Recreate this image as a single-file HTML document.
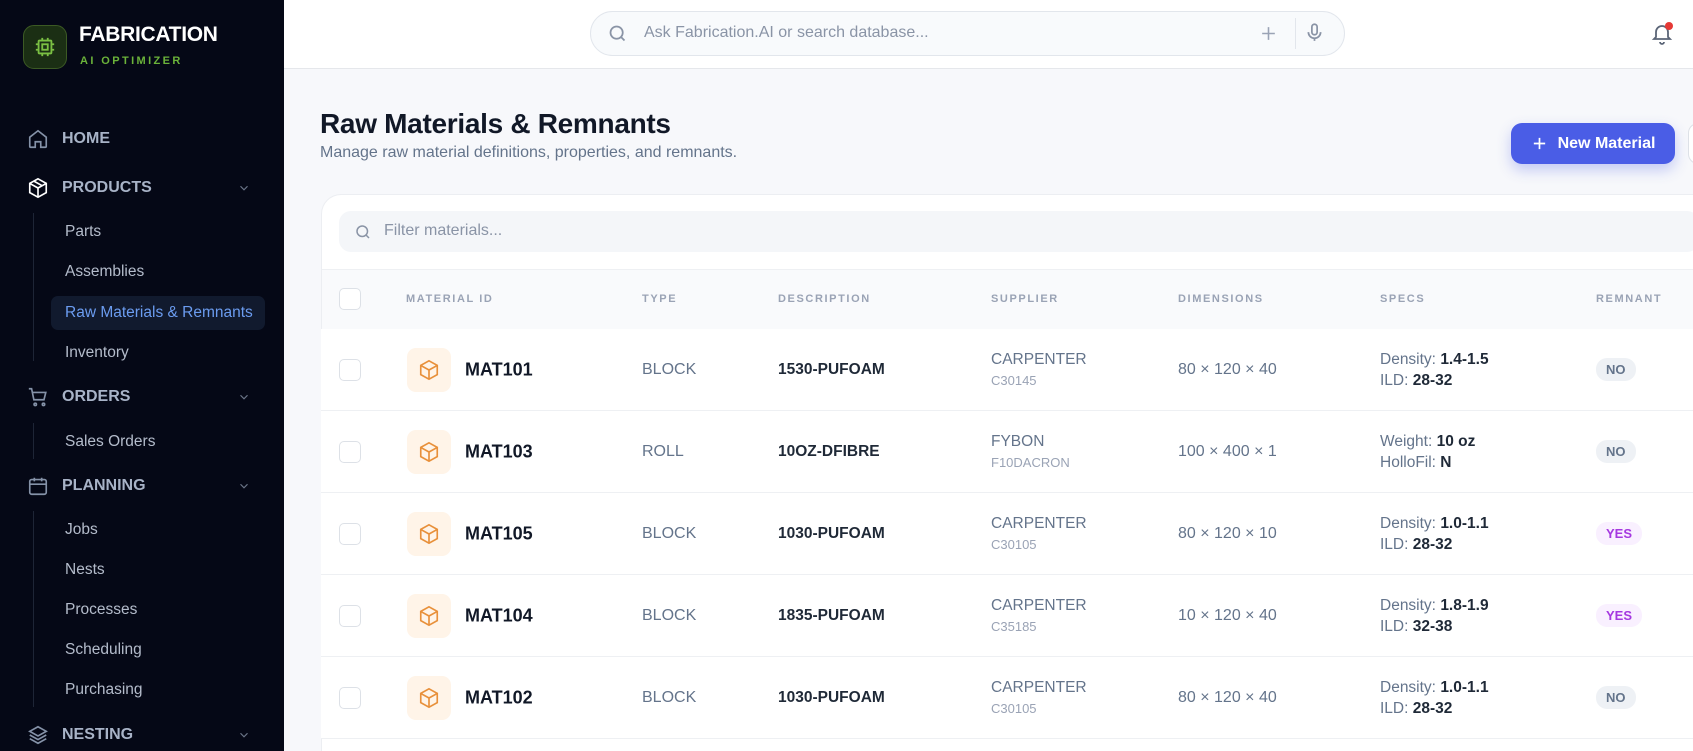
<!DOCTYPE html>
<html style="width:1693px;height:751px;overflow:hidden"><head><meta charset="utf-8"><style>
*{box-sizing:border-box;margin:0;padding:0}
body{width:1693px;height:751px;overflow:hidden;font-family:"Liberation Sans",sans-serif;background:#f7f8fb;position:relative}
.a{position:absolute}
#sb{left:0;top:0;width:284px;height:751px;background:#050816}
.nav{position:absolute;left:62px;font-size:16px;font-weight:bold;color:#a8b3c7;transform:translateY(-50%)}
.ico{position:absolute;left:27px;transform:translateY(-50%)}
.chev{position:absolute;left:237px;transform:translateY(-50%)}
.sub{position:absolute;left:65px;font-size:15.5px;color:#b4bccb;transform:translateY(-50%)}
.vl{position:absolute;left:33px;width:1px;background:#1e2536}
#hd{left:284px;top:0;width:1409px;height:69px;background:#fff;border-bottom:1px solid #e5e7eb}
.th{position:absolute;top:299px;transform:translateY(-50%);font-size:11px;font-weight:bold;letter-spacing:1.6px;color:#9aa3b5}
.row{position:absolute;left:321px;width:1372px;height:82px;border-bottom:1px solid #eef0f3;background:#fff}
.c{position:absolute;top:50%;transform:translateY(-50%)}
.cb{width:22px;height:22px;border:1.5px solid #dde1e7;border-radius:5px;background:#fff}
.box{width:44px;height:44px;border-radius:9px;background:#fff4e8;display:flex;align-items:center;justify-content:center}
.id{font-size:18px;font-weight:bold;color:#111827}
.t{font-size:16px;color:#64748b}
.d{font-size:15.5px;font-weight:bold;color:#1f2937}
.s1{font-size:15.5px;color:#64748b;line-height:22px}
.s2{font-size:13px;color:#9aa3b5;line-height:20px}
.sp{font-size:15.5px;color:#64748b;line-height:21px}
.sp b{color:#1f2937}
.no{font-size:13px;font-weight:bold;color:#64748b;background:#eef1f5;border-radius:11px;padding:4px 10px}
.yes{font-size:13px;font-weight:bold;color:#a538e0;background:#f9f0ff;border-radius:11px;padding:4px 10px}
</style></head><body>
<div id="sb" class="a">
 <div class="a" style="left:23px;top:25px;width:44px;height:44px;border-radius:11px;background:#1b2f14;border:1px solid #3c5a24;display:flex;align-items:center;justify-content:center">
  <svg width="22" height="22" viewBox="0 0 24 24" fill="none" stroke="#7bc043" stroke-width="2"><rect x="5" y="5" width="14" height="14" rx="1"/><rect x="9" y="9" width="6" height="6"/><path d="M9 2v3M15 2v3M9 19v3M15 19v3M2 9h3M2 15h3M19 9h3M19 15h3"/></svg>
 </div>
 <div class="a" style="left:79px;top:23px;font-size:21px;font-weight:bold;color:#fff;letter-spacing:-0.3px">FABRICATION</div>
 <div class="a" style="left:80px;top:55px;font-size:11px;font-weight:bold;color:#6bb33a;letter-spacing:2.4px">AI OPTIMIZER</div>

 <svg class="ico" style="top:139px" width="22" height="22" viewBox="0 0 24 24" fill="none" stroke="#8592a8" stroke-width="1.8"><path d="M3 10l9-7 9 7v10a1 1 0 0 1-1 1h-5v-6h-6v6H4a1 1 0 0 1-1-1z"/></svg>
 <div class="nav" style="top:139px">HOME</div>
 <svg class="ico" style="top:188px" width="22" height="22" viewBox="0 0 24 24" fill="none" stroke="#fff" stroke-width="1.8"><path d="M12 2l9 5v10l-9 5-9-5V7z"/><path d="M3 7l9 5 9-5M12 12v10M7.5 4.5l9 5"/></svg>
 <div class="nav" style="top:188px">PRODUCTS</div>
 <svg class="chev" style="top:188px" width="14" height="14" viewBox="0 0 24 24" fill="none" stroke="#6b7588" stroke-width="2"><path d="M6 9l6 6 6-6"/></svg>
 <div class="vl" style="top:213px;height:148px"></div>
 <div class="sub" style="top:232px">Parts</div>
 <div class="sub" style="top:272px">Assemblies</div>
 <div class="a" style="left:51px;top:296px;width:214px;height:34px;border-radius:7px;background:#111a2e"></div>
 <div class="sub" style="top:313px;color:#6b9cf0">Raw Materials &amp; Remnants</div>
 <div class="sub" style="top:353px">Inventory</div>
 <svg class="ico" style="top:397px" width="22" height="22" viewBox="0 0 24 24" fill="none" stroke="#8592a8" stroke-width="1.8"><path d="M2 3h3l2.5 12h11l2-8H6"/><circle cx="9" cy="20" r="1.3"/><circle cx="18" cy="20" r="1.3"/></svg>
 <div class="nav" style="top:397px">ORDERS</div>
 <svg class="chev" style="top:397px" width="14" height="14" viewBox="0 0 24 24" fill="none" stroke="#6b7588" stroke-width="2"><path d="M6 9l6 6 6-6"/></svg>
 <div class="vl" style="top:423px;height:36px"></div>
 <div class="sub" style="top:442px">Sales Orders</div>
 <svg class="ico" style="top:486px" width="22" height="22" viewBox="0 0 24 24" fill="none" stroke="#8592a8" stroke-width="1.8"><rect x="3" y="5" width="18" height="16" rx="2"/><path d="M3 10h18M8 3v4M16 3v4"/></svg>
 <div class="nav" style="top:486px">PLANNING</div>
 <svg class="chev" style="top:486px" width="14" height="14" viewBox="0 0 24 24" fill="none" stroke="#6b7588" stroke-width="2"><path d="M6 9l6 6 6-6"/></svg>
 <div class="vl" style="top:511px;height:196px"></div>
 <div class="sub" style="top:530px">Jobs</div>
 <div class="sub" style="top:570px">Nests</div>
 <div class="sub" style="top:610px">Processes</div>
 <div class="sub" style="top:650px">Scheduling</div>
 <div class="sub" style="top:690px">Purchasing</div>
 <svg class="ico" style="top:735px" width="22" height="22" viewBox="0 0 24 24" fill="none" stroke="#8592a8" stroke-width="1.8"><path d="M12 3l9 5-9 5-9-5z"/><path d="M3 12l9 5 9-5M3 16l9 5 9-5"/></svg>
 <div class="nav" style="top:735px">NESTING</div>
 <svg class="chev" style="top:735px" width="14" height="14" viewBox="0 0 24 24" fill="none" stroke="#6b7588" stroke-width="2"><path d="M6 9l6 6 6-6"/></svg>
</div>

<div id="hd" class="a"></div>
<div class="a" style="left:590px;top:11px;width:755px;height:45px;border:1px solid #e2e6ec;border-radius:23px;background:#f8fafc"></div>
<svg class="a" style="left:607px;top:23px" width="21" height="21" viewBox="0 0 24 24" fill="none" stroke="#8a94a6" stroke-width="2"><circle cx="11" cy="11" r="7"/><path d="M20 20l-4-4"/></svg>
<div class="a" style="left:644px;top:24px;font-size:16px;color:#8a94a6">Ask Fabrication.AI or search database...</div>
<svg class="a" style="left:1259px;top:24px" width="19" height="19" viewBox="0 0 24 24" fill="none" stroke="#9aa3b5" stroke-width="2"><path d="M12 4v16M4 12h16"/></svg>
<div class="a" style="left:1295px;top:18px;width:1px;height:31px;background:#e2e6ec"></div>
<svg class="a" style="left:1304px;top:22px" width="21" height="22" viewBox="0 0 24 24" fill="none" stroke="#8a94a6" stroke-width="2"><rect x="9" y="2" width="6" height="12" rx="3"/><path d="M5 11a7 7 0 0 0 14 0M12 18v3"/></svg>
<svg class="a" style="left:1650px;top:21px" width="24" height="24" viewBox="0 0 24 24" fill="none" stroke="#5b6577" stroke-width="1.8"><path d="M6 16V11a6 6 0 0 1 12 0v5l2 2H4z"/><path d="M10 21a2 2 0 0 0 4 0"/></svg>
<div class="a" style="left:1665px;top:22px;width:8px;height:8px;border-radius:50%;background:#e53935"></div>

<div class="a" style="left:320px;top:108px;font-size:28px;font-weight:bold;color:#111827;letter-spacing:-0.3px">Raw Materials &amp; Remnants</div>
<div class="a" style="left:320px;top:144px;font-size:16px;color:#64748b">Manage raw material definitions, properties, and remnants.</div>
<div class="a" style="left:1511px;top:123px;width:164px;height:41px;border-radius:11px;background:#4a5de6;box-shadow:0 6px 14px rgba(74,93,230,.3);color:#fff;font-weight:bold;font-size:16px;display:flex;align-items:center;justify-content:center;gap:10px"><svg width="17" height="17" viewBox="0 0 24 24" fill="none" stroke="#fff" stroke-width="2.4"><path d="M12 4v16M4 12h16"/></svg>New Material</div>
<div class="a" style="left:1688px;top:123px;width:20px;height:41px;border-radius:11px;border:1px solid #dde1e7;background:#fff"></div>

<div class="a" style="left:321px;top:194px;width:1400px;height:557px;border-radius:20px 0 0 0;background:#fff;border:1px solid #eceef2;border-bottom:none"></div>
<div class="a" style="left:339px;top:211px;width:1360px;height:41px;border-radius:12px;background:#f4f6f9"></div>
<svg class="a" style="left:354px;top:223px" width="18" height="18" viewBox="0 0 24 24" fill="none" stroke="#8a94a6" stroke-width="2"><circle cx="11" cy="11" r="7"/><path d="M20 20l-4-4"/></svg>
<div class="a" style="left:384px;top:222px;font-size:16px;color:#8a94a6">Filter materials...</div>
<div class="a" style="left:322px;top:269px;width:1371px;height:60px;background:#f9fafc;border-top:1px solid #eef0f3"></div>
<div class="a cb" style="left:339px;top:288px"></div>
<div class="th" style="left:406px">MATERIAL ID</div>
<div class="th" style="left:642px">TYPE</div>
<div class="th" style="left:778px">DESCRIPTION</div>
<div class="th" style="left:991px">SUPPLIER</div>
<div class="th" style="left:1178px">DIMENSIONS</div>
<div class="th" style="left:1380px">SPECS</div>
<div class="th" style="left:1596px">REMNANT</div>

<div class="row" style="top:329px">
 <div class="c cb" style="left:18px"></div>
 <div class="c box" style="left:86px"><svg width="22" height="22" viewBox="0 0 24 24" fill="none" stroke="#e8903a" stroke-width="1.8"><path d="M12 2l9 5v10l-9 5-9-5V7z"/><path d="M3 7l9 5 9-5M12 12v10"/></svg></div>
 <div class="c id" style="left:144px">MAT101</div><div class="c t" style="left:321px">BLOCK</div><div class="c d" style="left:457px">1530-PUFOAM</div>
 <div class="c" style="left:670px"><div class="s1">CARPENTER</div><div class="s2">C30145</div></div>
 <div class="c t" style="left:857px">80 × 120 × 40</div>
 <div class="c sp" style="left:1059px">Density: <b>1.4-1.5</b><br>ILD: <b>28-32</b></div>
 <div class="c" style="left:1275px"><span class="no">NO</span></div>
</div>
<div class="row" style="top:411px">
 <div class="c cb" style="left:18px"></div>
 <div class="c box" style="left:86px"><svg width="22" height="22" viewBox="0 0 24 24" fill="none" stroke="#e8903a" stroke-width="1.8"><path d="M12 2l9 5v10l-9 5-9-5V7z"/><path d="M3 7l9 5 9-5M12 12v10"/></svg></div>
 <div class="c id" style="left:144px">MAT103</div><div class="c t" style="left:321px">ROLL</div><div class="c d" style="left:457px">10OZ-DFIBRE</div>
 <div class="c" style="left:670px"><div class="s1">FYBON</div><div class="s2">F10DACRON</div></div>
 <div class="c t" style="left:857px">100 × 400 × 1</div>
 <div class="c sp" style="left:1059px">Weight: <b>10 oz</b><br>HolloFil: <b>N</b></div>
 <div class="c" style="left:1275px"><span class="no">NO</span></div>
</div>
<div class="row" style="top:493px">
 <div class="c cb" style="left:18px"></div>
 <div class="c box" style="left:86px"><svg width="22" height="22" viewBox="0 0 24 24" fill="none" stroke="#e8903a" stroke-width="1.8"><path d="M12 2l9 5v10l-9 5-9-5V7z"/><path d="M3 7l9 5 9-5M12 12v10"/></svg></div>
 <div class="c id" style="left:144px">MAT105</div><div class="c t" style="left:321px">BLOCK</div><div class="c d" style="left:457px">1030-PUFOAM</div>
 <div class="c" style="left:670px"><div class="s1">CARPENTER</div><div class="s2">C30105</div></div>
 <div class="c t" style="left:857px">80 × 120 × 10</div>
 <div class="c sp" style="left:1059px">Density: <b>1.0-1.1</b><br>ILD: <b>28-32</b></div>
 <div class="c" style="left:1275px"><span class="yes">YES</span></div>
</div>
<div class="row" style="top:575px">
 <div class="c cb" style="left:18px"></div>
 <div class="c box" style="left:86px"><svg width="22" height="22" viewBox="0 0 24 24" fill="none" stroke="#e8903a" stroke-width="1.8"><path d="M12 2l9 5v10l-9 5-9-5V7z"/><path d="M3 7l9 5 9-5M12 12v10"/></svg></div>
 <div class="c id" style="left:144px">MAT104</div><div class="c t" style="left:321px">BLOCK</div><div class="c d" style="left:457px">1835-PUFOAM</div>
 <div class="c" style="left:670px"><div class="s1">CARPENTER</div><div class="s2">C35185</div></div>
 <div class="c t" style="left:857px">10 × 120 × 40</div>
 <div class="c sp" style="left:1059px">Density: <b>1.8-1.9</b><br>ILD: <b>32-38</b></div>
 <div class="c" style="left:1275px"><span class="yes">YES</span></div>
</div>
<div class="row" style="top:657px">
 <div class="c cb" style="left:18px"></div>
 <div class="c box" style="left:86px"><svg width="22" height="22" viewBox="0 0 24 24" fill="none" stroke="#e8903a" stroke-width="1.8"><path d="M12 2l9 5v10l-9 5-9-5V7z"/><path d="M3 7l9 5 9-5M12 12v10"/></svg></div>
 <div class="c id" style="left:144px">MAT102</div><div class="c t" style="left:321px">BLOCK</div><div class="c d" style="left:457px">1030-PUFOAM</div>
 <div class="c" style="left:670px"><div class="s1">CARPENTER</div><div class="s2">C30105</div></div>
 <div class="c t" style="left:857px">80 × 120 × 40</div>
 <div class="c sp" style="left:1059px">Density: <b>1.0-1.1</b><br>ILD: <b>28-32</b></div>
 <div class="c" style="left:1275px"><span class="no">NO</span></div>
</div>
</body></html>
